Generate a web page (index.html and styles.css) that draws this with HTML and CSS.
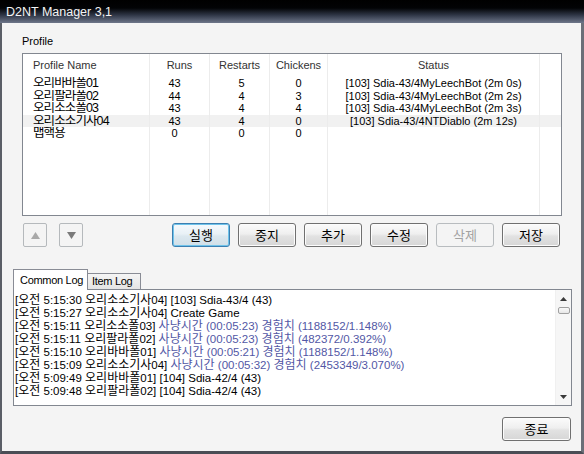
FILE: index.html
```html
<!DOCTYPE html>
<html lang="ko">
<head>
<meta charset="utf-8">
<title>D2NT Manager 3,1</title>
<link rel="stylesheet" href="styles.css">
</head>
<body>
<div class="window">
  <div class="titlebar">D2NT Manager 3,1</div>
  <div class="client">
    <div class="label">Profile</div>
    <div class="list">
      <div class="row head">
        <div class="c c1">Profile Name</div>
        <div class="c c2">Runs</div>
        <div class="c c3">Restarts</div>
        <div class="c c4">Chickens</div>
        <div class="c c5">Status</div>
        <div class="c c6"></div>
      </div>
      <div class="row data">
        <div class="c c1">오리바바폴01</div>
        <div class="c c2">43</div>
        <div class="c c3">5</div>
        <div class="c c4">0</div>
        <div class="c c5">[103] Sdia-43/4MyLeechBot (2m 0s)</div>
        <div class="c c6"></div>
      </div>
      <div class="row data">
        <div class="c c1">오리팔라폴02</div>
        <div class="c c2">44</div>
        <div class="c c3">4</div>
        <div class="c c4">3</div>
        <div class="c c5">[103] Sdia-43/4MyLeechBot (2m 2s)</div>
        <div class="c c6"></div>
      </div>
      <div class="row data">
        <div class="c c1">오리소소폴03</div>
        <div class="c c2">43</div>
        <div class="c c3">4</div>
        <div class="c c4">4</div>
        <div class="c c5">[103] Sdia-43/4MyLeechBot (2m 3s)</div>
        <div class="c c6"></div>
      </div>
      <div class="row data hl">
        <div class="c c1">오리소소기사04</div>
        <div class="c c2">43</div>
        <div class="c c3">4</div>
        <div class="c c4">0</div>
        <div class="c c5">[103] Sdia-43/4NTDiablo (2m 12s)</div>
        <div class="c c6"></div>
      </div>
      <div class="row data">
        <div class="c c1">맵핵용</div>
        <div class="c c2">0</div>
        <div class="c c3">0</div>
        <div class="c c4">0</div>
        <div class="c c5"></div>
        <div class="c c6"></div>
      </div>
      <div class="row fill">
        <div class="c c1"></div>
        <div class="c c2"></div>
        <div class="c c3"></div>
        <div class="c c4"></div>
        <div class="c c5"></div>
        <div class="c c6"></div>
      </div>
    </div>

    <div class="btnrow">
      <button class="arrow"><svg width="9" height="7" viewBox="0 0 9 7"><polygon points="0,7 4.5,0 9,7" fill="#a9a9a9"/></svg></button>
      <button class="arrow"><svg width="9" height="7" viewBox="0 0 9 7"><polygon points="0,0 9,0 4.5,7" fill="#7a7a7a"/></svg></button>
      <div class="actions">
        <button class="btn focus">실행</button>
        <button class="btn">중지</button>
        <button class="btn">추가</button>
        <button class="btn">수정</button>
        <button class="btn disabled">삭제</button>
        <button class="btn">저장</button>
      </div>
    </div>

    <div class="tabs">
      <div class="tab active">Common Log</div>
      <div class="tab other">Item Log</div>
    </div>
    <div class="log">
      <div class="lines">
        <div class="line">[<span class="k">오전</span> 5:15:30 <span class="k">오리소소기사</span>04] [103] Sdia-43/4 (43)</div>
        <div class="line">[<span class="k">오전</span> 5:15:27 <span class="k">오리소소기사</span>04] Create Game</div>
        <div class="line">[<span class="k">오전</span> 5:15:11 <span class="k">오리소소폴</span>03] <span class="b"><span class="k">사냥시간</span> (00:05:23) <span class="k">경험치</span> (1188152/1.148%)</span></div>
        <div class="line">[<span class="k">오전</span> 5:15:11 <span class="k">오리팔라폴</span>02] <span class="b"><span class="k">사냥시간</span> (00:05:23) <span class="k">경험치</span> (482372/0.392%)</span></div>
        <div class="line">[<span class="k">오전</span> 5:15:10 <span class="k">오리바바폴</span>01] <span class="b"><span class="k">사냥시간</span> (00:05:21) <span class="k">경험치</span> (1188152/1.148%)</span></div>
        <div class="line">[<span class="k">오전</span> 5:15:09 <span class="k">오리소소기사</span>04] <span class="b"><span class="k">사냥시간</span> (00:05:32) <span class="k">경험치</span> (2453349/3.070%)</span></div>
        <div class="line">[<span class="k">오전</span> 5:09:49 <span class="k">오리바바폴</span>01] [104] Sdia-42/4 (43)</div>
        <div class="line">[<span class="k">오전</span> 5:09:48 <span class="k">오리팔라폴</span>02] [104] Sdia-42/4 (43)</div>
      </div>
      <div class="sb">
        <div class="sbtn"><svg width="7" height="4" viewBox="0 0 7 4"><polygon points="0,4 3.5,0 7,4" fill="#3a3a3a"/></svg></div>
        <div class="thumb"></div>
        <div class="track"></div>
        <div class="sbtn"><svg width="7" height="4" viewBox="0 0 7 4"><polygon points="0,0 7,0 3.5,4" fill="#3a3a3a"/></svg></div>
      </div>
    </div>

    <div class="footer">
      <button class="btn close">종료</button>
    </div>
  </div>
</div>
</body>
</html>
```
FILE: styles.css
```css
* { box-sizing: border-box; }
html, body { margin: 0; padding: 0; }
body {
  width: 584px;
  height: 454px;
  overflow: hidden;
  font-family: "Liberation Sans", "Noto Sans CJK KR", sans-serif;
  font-size: 11px;
  color: #000;
  background: #f4f4f4;
}
.window { width: 584px; height: 454px; display: flex; flex-direction: column; }
.titlebar {
  height: 23px;
  flex: none;
  background: linear-gradient(#000 0%, #020305 35%, #2e3545 65%, #6e768a 100%);
  color: #f4f4f4;
  font-size: 12.5px;
  line-height: 24px;
  padding-left: 6px;
}
.client {
  flex: 1;
  background: #f4f4f4;
  border-left: 2px solid #5a5e66;
  border-right: 3px solid #6b6f78;
  border-bottom: 3px solid #4a4d55;
  padding-top: 12px;
  display: flex;
  flex-direction: column;
}
.label { margin-left: 20px; height: 13px; line-height: 13px; }

.list {
  margin: 5px 0 0 20px;
  width: 540px;
  height: 163px;
  border: 1px solid #828790;
  background: #fff;
  display: flex;
  flex-direction: column;
  flex: none;
}
.row { display: flex; height: 12.5px; line-height: 12.5px; flex: none; }
.row.head { height: 23px; line-height: 22px; color: #333; }
.row.hl { background: #f1f1f1; }
.row.fill { flex: 1; }
.c { border-right: 1px solid #ececec; text-align: center; white-space: nowrap; overflow: hidden; }
.c1 { width: 127px; text-align: left; padding-left: 10px; }
.c2 { width: 60px; }
.c3 { width: 60px; }
.c4 { width: 58px; }
.c5 { width: 212px; }
.c6 { width: 21px; border-right: none; }
.data .c1 { font-size: 12.5px; letter-spacing: -0.9px; }
.data .c2 { padding-right: 10px; }
.data .c3 { padding-left: 4px; }

.btnrow { display: flex; margin: 7px 20px 0; padding: 0 1px; height: 24px; flex: none; }
button { font: inherit; margin: 0; padding: 0; color: inherit; }
.arrow {
  width: 24px;
  height: 24px;
  border: 1px solid #b5b9bc;
  border-radius: 2px;
  background: #f4f4f4;
  display: flex;
  align-items: center;
  justify-content: center;
}
.arrow + .arrow { margin-left: 12px; }
.arrow svg { display: block; }
.actions { margin-left: auto; display: flex; gap: 8px; }
.btn {
  width: 58px;
  height: 24px;
  border: 1px solid #707070;
  border-radius: 3px;
  background: linear-gradient(#fbfbfb 0%, #efefef 45%, #e2e2e2 55%, #d6d6d6 100%);
  box-shadow: inset 0 0 0 1px #fcfcfc;
  font-family: "Noto Sans CJK KR", sans-serif;
  font-size: 13px;
  line-height: 20px;
  color: #000;
}
.btn.focus {
  border-color: #3c7fb1;
  box-shadow: inset 0 0 0 1px #6fc3ea;
  background: linear-gradient(#f6fafd 0%, #e9f1f6 45%, #dce8ef 55%, #d0dfe8 100%);
}
.btn.disabled {
  border-color: #b8bcbf;
  background: #f4f4f4;
  box-shadow: none;
  color: #a2a2a2;
}

.tabs {
  display: flex;
  align-items: flex-end;
  margin: 22px 0 0 11px;
  height: 20px;
  flex: none;
  position: relative;
  z-index: 1;
}
.tab { border: 1px solid #898c95; border-bottom: none; white-space: nowrap; }
.tab.active {
  width: 75px;
  height: 21px;
  margin-bottom: -1px;
  background: #fff;
  line-height: 20px;
  padding-left: 6px;
  letter-spacing: -0.3px;
}
.tab.other {
  width: 53px;
  height: 16px;
  border-left: none;
  background: linear-gradient(#f5f5f5, #e4e4e4);
  line-height: 15px;
  padding-left: 4px;
  letter-spacing: -0.3px;
}

.log {
  margin: 0 9px 0 11px;
  height: 117px;
  flex: none;
  border: 1px solid #828790;
  background: #fff;
  display: flex;
}
.lines { flex: 1; padding: 4px 0 0 1px; overflow: hidden; font-size: 11.5px; }
.line { height: 13px; line-height: 13px; white-space: nowrap; }
.k { font-size: 12px; }
.b { color: #5257a5; }
.sb {
  width: 16px;
  background: #f6f6f6;
  border-left: 1px solid #f0f0f0;
  display: flex;
  flex-direction: column;
  align-items: center;
}
.sbtn { height: 17px; width: 100%; display: flex; align-items: center; justify-content: center; }
.sbtn svg { display: block; }
.thumb {
  width: 12px;
  height: 7px;
  border: 1px solid #a0a0a0;
  border-radius: 2px;
  background: linear-gradient(#fafafa, #e6e6e6);
}
.track { flex: 1; }

.footer { display: flex; justify-content: flex-end; margin: 11px 10px 0 0; }
.btn.close { width: 69px; }
```
